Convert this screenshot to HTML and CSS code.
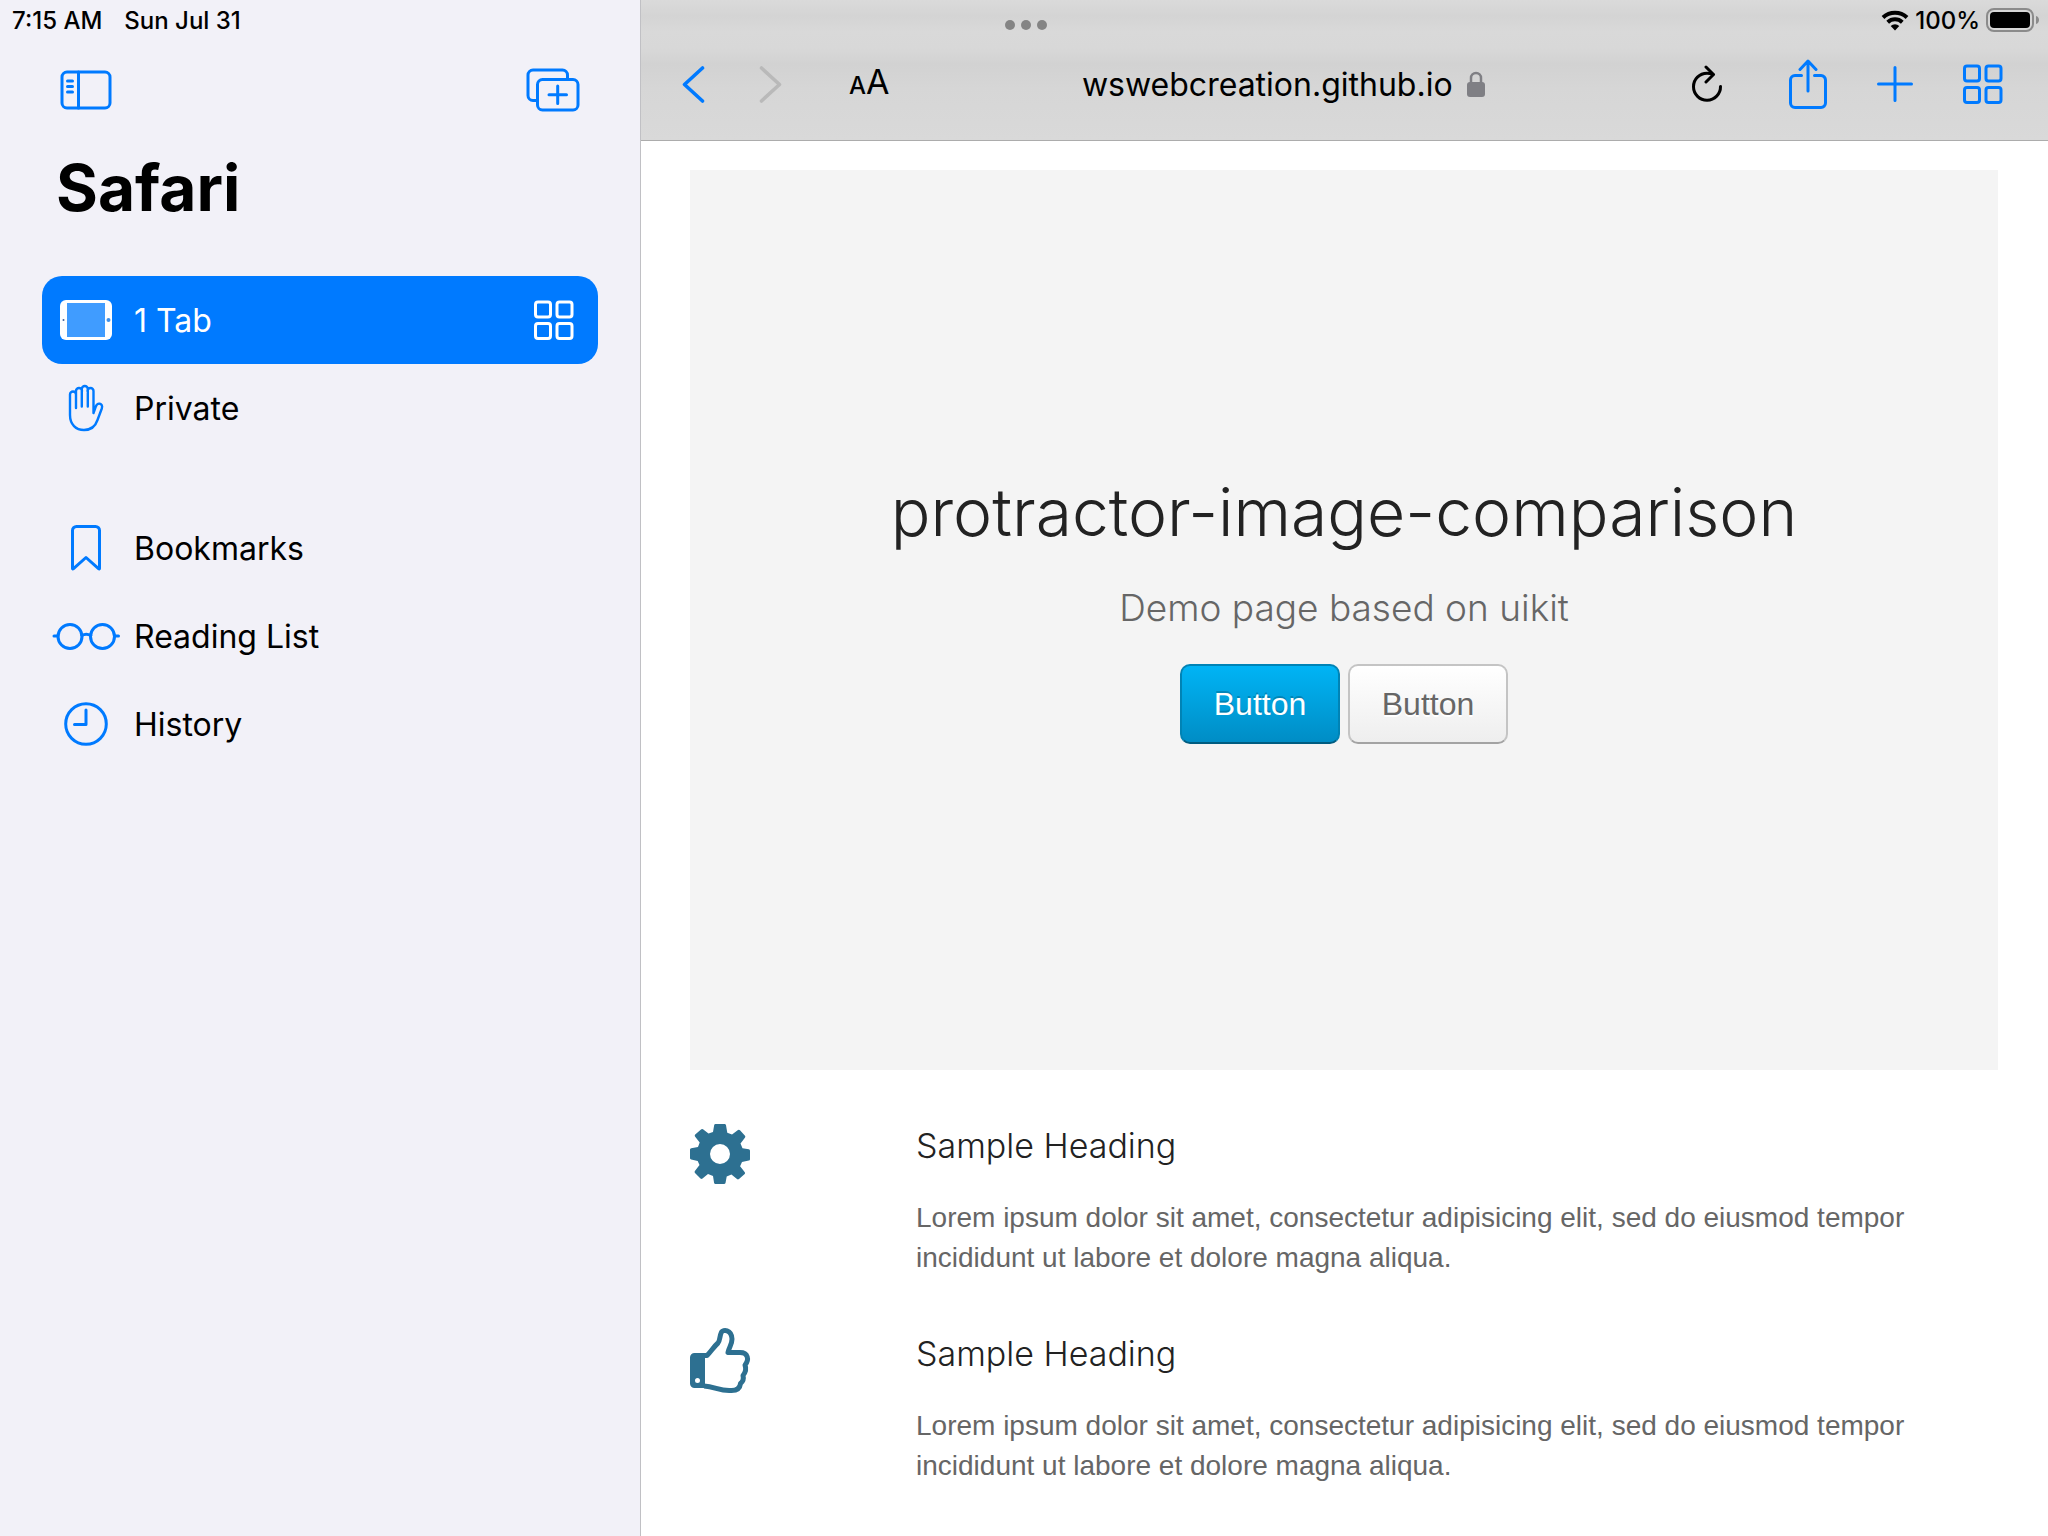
FILE: index.html
```html
<!DOCTYPE html>
<html lang="en">
<head>
<meta charset="utf-8">
<meta name="viewport" content="width=device-width, initial-scale=1">
<title>protractor-image-comparison</title>
<link rel="stylesheet" href="styles.css">
</head>
<body>
<div class="app">
  <div class="status">
    <div class="status-left"><span>7:15 AM</span><span>Sun Jul 31</span></div>
    <button class="multitask" aria-label="Multitasking"><i></i><i></i><i></i></button>
    <div class="status-right">
      <svg class="wifi" width="28" height="22" viewBox="0 0 28 22" aria-label="Wi-Fi"><path d="M2 8.500a17.500 17.500 0 0 1 24 0M6.700 13.200a10.800 10.800 0 0 1 14.600 0" fill="none" stroke="#000" stroke-width="4"/><path d="M14 21.500l-4.300-4.400a6.200 6.200 0 0 1 8.600 0z"/></svg>
      <span>100%</span>
      <svg class="battery" width="54" height="24" viewBox="0 0 54 24" aria-label="Battery"><rect x="1" y="1" width="46" height="22" rx="7" fill="none" stroke="#8b8b8b" stroke-width="2"/><rect x="4" y="4" width="40" height="16" rx="4"/><path d="M50 8c4 1 4 7 0 8z" fill="#8b8b8b"/></svg>
    </div>
  </div>

  <aside class="sidebar">
    <div class="sidebar-tools">
      <button class="icon-btn" aria-label="Hide sidebar"><svg width="52" height="40" viewBox="0 0 52 40"><g class="line"><rect x="2" y="2" width="48" height="36" rx="5"/><path d="M18.500 2v36M7.500 11h5M7.500 16.500h5M7.500 22h5"/></g></svg></button>
      <button class="icon-btn" aria-label="New tab group"><svg width="54" height="44" viewBox="0 0 54 44"><g class="line"><path d="M11 32.500H7a5 5 0 0 1-5-5V7a5 5 0 0 1 5-5h29.500a5 5 0 0 1 5 5v4"/><rect x="11.500" y="11.500" width="40.500" height="30.500" rx="5"/><path d="M31.700 18v17.500M23 26.700h17.500"/></g></svg></button>
    </div>
    <h1 class="sidebar-title">Safari</h1>
    <nav class="menu">
      <ul>
        <li><a href="#" class="item selected"><span class="item-icon"><svg width="52" height="40" viewBox="0 0 52 40"><rect width="52" height="40" rx="6" fill="#fff"/><rect x="7" y="3" width="38" height="34" fill="#409cff"/><circle cx="3.500" cy="20" r="1" fill="#40609a"/><circle cx="48.500" cy="20" r="2" fill="#4090e8"/></svg></span><span class="item-label">1 Tab</span><svg width="40" height="40" viewBox="0 0 40 40"><g class="line"><rect x="1.500" y="2" width="15" height="15" rx="2.500"/><rect x="23" y="2" width="15" height="15" rx="2.500"/><rect x="1.500" y="23.500" width="15" height="15" rx="2.500"/><rect x="23" y="23.500" width="15" height="15" rx="2.500"/></g></svg></a></li>
        <li><a href="#" class="item"><span class="item-icon"><svg width="36" height="48" viewBox="0 0 36 48"><g class="line thin"><path d="M8 24V10.500a3 3 0 0 0-6 0V31c0 9.500 6 15 14 15 7.500 0 11.500-4 13.500-10l4.300-11.500c1-3-.5-4.500-2-4.800-2-.4-3.200.8-4 2.800L25.500 29V7a3 3 0 0 0-6 0M8 11V7a3 3 0 0 1 6 0M13.800 22.500V5a3 3 0 0 1 6 0M19.800 5V22.500"/></g></svg></span><span class="item-label">Private</span></a></li>
      </ul>
      <ul>
        <li><a href="#" class="item"><span class="item-icon"><svg width="30" height="46" viewBox="0 0 30 46"><g class="line"><path d="M1.500 43.500V5.500a4 4 0 0 1 4-4h19a4 4 0 0 1 4 4v38q0 1-1 .2L15 32.500 2.500 43.700q-1 .8-1-.2z"/></g></svg></span><span class="item-label">Bookmarks</span></a></li>
        <li><a href="#" class="item"><span class="item-icon"><svg width="68" height="28" viewBox="0 0 68 28"><g class="line"><circle cx="18" cy="14.500" r="12"/><circle cx="50.500" cy="14.500" r="12"/><path d="M29.800 13.500c3-1.800 6-1.800 9 0M2 14H6M62.500 14H66.500"/></g></svg></span><span class="item-label">Reading List</span></a></li>
        <li><a href="#" class="item"><span class="item-icon"><svg width="44" height="44" viewBox="0 0 44 44"><g class="line"><circle cx="22" cy="22" r="20.300"/><path d="M22 8v14.500H10.500"/></g></svg></span><span class="item-label">History</span></a></li>
      </ul>
    </nav>
  </aside>

  <div class="browser">
    <header class="toolbar">
      <div class="history-nav">
        <button class="icon-btn" aria-label="Back"><svg width="24" height="38" viewBox="0 0 24 38"><path class="line thick" d="M21.500 3L3.500 19.500l18 16.500"/></svg></button>
        <button class="icon-btn off" aria-label="Forward" disabled><svg width="24" height="38" viewBox="0 0 24 38"><path class="line thick" d="M2.500 3l18 16.500L2.500 36"/></svg></button>
      </div>
      <div class="address">
        <button class="reader" aria-label="Page settings"><span class="small-a">A</span><span>A</span></button>
        <div class="url"><span>wswebcreation.github.io</span><svg width="18" height="28" viewBox="0 0 18 28" aria-label="Secure"><path d="M4 14V8a5 5 0 0 1 10 0v6" fill="none" stroke="#7f7f84" stroke-width="2.500"/><rect y="12" width="18" height="15" rx="3" fill="#7f7f84"/></svg></div>
        <button class="icon-btn dark" aria-label="Reload"><svg width="32" height="38" viewBox="0 0 32 38"><g class="line"><path d="M22 9.500C20 8.600 18 8.200 16 8.200A13.500 13.500 0 1 0 29.500 21.500"/><path d="M15 2l7.500 7.500-7.500 7.500"/></g></svg></button>
      </div>
      <div class="actions">
        <button class="icon-btn" aria-label="Share"><svg width="38" height="50" viewBox="0 0 38 50"><g class="line"><path d="M12.500 16.500H6a4.500 4.500 0 0 0-4.500 4.500v23A4.500 4.500 0 0 0 6 48.500h26a4.500 4.500 0 0 0 4.500-4.500V21a4.500 4.500 0 0 0-4.500-4.500h-6.500M19 32V2.500M11 10.500l8-8.500 8 8.500"/></g></svg></button>
        <button class="icon-btn" aria-label="New tab"><svg width="36" height="36" viewBox="0 0 36 36"><path class="line" d="M18 1.500v33M1.500 18h33"/></svg></button>
        <button class="icon-btn" aria-label="Tab overview"><svg width="40" height="40" viewBox="0 0 40 40"><g class="line"><rect x="1.500" y="2" width="15" height="15" rx="2.500"/><rect x="23" y="2" width="15" height="15" rx="2.500"/><rect x="1.500" y="23.500" width="15" height="15" rx="2.500"/><rect x="23" y="23.500" width="15" height="15" rx="2.500"/></g></svg></button>
      </div>
    </header>

    <main class="page">
      <section class="hero">
        <h2>protractor-image-comparison</h2>
        <p>Demo page based on uikit</p>
        <div class="hero-actions">
          <button class="btn primary">Button</button>
          <button class="btn">Button</button>
        </div>
      </section>

      <article class="feature">
        <svg class="feature-icon" width="60" height="60" viewBox="0 0 60 60" aria-hidden="true"><path fill="#2d7091" fill-rule="evenodd" d="M25.500 0h9q1.200 0 1.500 1.200l1.300 7.500 4.700 1.900 6-4.500q1-.7 2 .2l5 5.500q.8 1-.1 2l-4.400 5.700 2 4.800 6.300 1q1.200.2 1.200 1.500v8.400q0 1.200-1.200 1.400l-6.800 1.300-1.900 4.300 4.700 6q.7 1-.1 1.900L49 55q-1 .8-2 .1l-5.600-4.500-4.700 2-1.200 6.400q-.3 1-1.500 1h-8.500q-1.100 0-1.400-1L23 52l-5-2-5.500 4.500q-1 .8-2 0L5 49q-.9-1-.1-2l4.600-6L7.700 37 1.200 35.500Q0 35.300 0 34.200v-8.600q0-1.200 1.200-1.400L8 23l1.700-4.600L5 12.500q-.7-1 .2-2L11 5.400q1-.8 2-.1l5.500 4.300L23 8l1.200-7q.3-1 1.300-1zM30 20a10 10 0 1 0 0 20 10 10 0 1 0 0-20z"/></svg>
        <div class="feature-text">
          <h3>Sample Heading</h3>
          <p>Lorem ipsum dolor sit amet, consectetur adipisicing elit, sed do eiusmod tempor incididunt ut labore et dolore magna aliqua.</p>
        </div>
      </article>

      <article class="feature">
        <svg class="feature-icon" width="60" height="60" viewBox="0 4 60 60" aria-hidden="true"><path fill="#2d7091" fill-rule="evenodd" d="M4.500 25H15v35H4.500A4.500 4.500 0 0 1 0 55.500v-26A4.500 4.500 0 0 1 4.500 25zM7.500 50a2.500 2.500 0 1 0 0 5 2.500 2.500 0 1 0 0-5z"/><path fill="none" stroke="#2d7091" stroke-width="5" stroke-linejoin="round" d="M14 27.500h3c4-4 7-9 11-12.500 2-2 1.500-7 3.500-11 1.500-2.500 10-3 10.500 7 0 6-3 8-4 13.500h12c8 0 9.500 7 5 12.500 1.500 4 .5 7.500-2 10.500.8 3 0 6-2.500 8-.5 5-4 7-9 7C30 63.500 25 58.500 14 58"/></svg>
        <div class="feature-text">
          <h3>Sample Heading</h3>
          <p>Lorem ipsum dolor sit amet, consectetur adipisicing elit, sed do eiusmod tempor incididunt ut labore et dolore magna aliqua.</p>
        </div>
      </article>
    </main>
  </div>
</div>
</body>
</html>
```
FILE: styles.css
```css
* {
  box-sizing: border-box;
}

body,
h1,
h2,
h3,
p,
ul {
  margin: 0;
  padding: 0;
}

body {
  font-family: Inter, "Liberation Sans", sans-serif;
  color: #000;
  background: #fff;
}

ul {
  list-style: none;
}

svg {
  display: block;
  flex: none;
}

button {
  font-family: inherit;
  color: inherit;
  background: none;
  border: 0;
  padding: 0;
}

.app {
  position: relative;
  display: grid;
  grid-template-columns: 641px 1fr;
  min-height: 100vh;
}

/* Status bar floats over both columns */
.status {
  position: absolute;
  top: 0;
  left: 0;
  right: 0;
  display: grid;
  grid-template-columns: 1fr auto 1fr;
  align-items: center;
  height: 40px;
  padding: 0 8px 0 12px;
  font-size: 24px;
  font-weight: 500;
}

.status-left {
  display: flex;
  gap: 22px;
}

.status-right {
  display: flex;
  align-items: center;
  justify-content: flex-end;
  gap: 6px;
}

.multitask {
  display: flex;
  gap: 6px;
  padding-top: 10px;
}

.multitask i {
  width: 10px;
  height: 10px;
  border-radius: 50%;
  background: #848484;
}

.line {
  fill: none;
  stroke: currentColor;
  stroke-width: 3;
  stroke-linecap: round;
  stroke-linejoin: round;
}

.thin {
  stroke-width: 2.4;
}

.thick {
  stroke-width: 3.6;
}

.icon-btn {
  color: #007aff;
}

.icon-btn.off {
  color: #b9b9b9;
}

.icon-btn.dark {
  color: #000;
}

/* Sidebar */
.sidebar {
  padding: 68px 42px 0;
  background: #f2f1f8;
  border-right: 1px solid #c0c0c4;
}

.sidebar-tools {
  display: flex;
  align-items: center;
  justify-content: space-between;
  padding: 0 18px;
}

.sidebar-title {
  margin-top: 36px;
  padding-left: 14px;
  font-size: 64px;
  line-height: 80px;
  font-weight: 700;
}

.menu {
  display: grid;
  gap: 52px;
  margin-top: 48px;
}

.item {
  display: flex;
  align-items: center;
  height: 88px;
  padding-right: 24px;
  border-radius: 20px;
  color: #007aff;
  text-decoration: none;
}

.item.selected {
  background: #007aff;
  color: #fff;
}

.item-icon {
  display: flex;
  justify-content: center;
  width: 88px;
  margin-right: 4px;
}

.item-label {
  flex: 1;
  font-size: 32px;
  color: #000;
}

.selected .item-label {
  color: #fff;
}

/* Browser */
.toolbar {
  display: flex;
  align-items: center;
  height: 141px;
  padding: 28px 45px 0 40px;
  border-bottom: 1px solid #acacac;
  background: linear-gradient(#dadada, #d4d4d4 16px, #d9d9d9 32px, #d8d8d8 48px, #d2d2d2 64px, #d6d6d6 88px, #d9d9d9);
}

.history-nav {
  display: flex;
  gap: 54px;
}

.address {
  flex: 1;
  display: flex;
  align-items: center;
  justify-content: space-between;
  margin: 0 66px;
}

.reader {
  font-size: 34px;
  line-height: 40px;
}

.small-a {
  font-size: 24px;
  font-weight: 500;
}

.url {
  display: flex;
  align-items: center;
  gap: 14px;
  margin-right: 14px;
  font-size: 32px;
}

.actions {
  display: flex;
  align-items: center;
  gap: 50px;
}

.page {
  padding: 29px 50px 56px 49px;
}

.hero {
  display: flex;
  flex-direction: column;
  align-items: center;
  justify-content: center;
  min-height: 900px;
  padding-bottom: 26px;
  background: #f4f4f4;
}

.hero h2 {
  font-size: 66px;
  line-height: 84px;
  font-weight: 300;
  color: #222;
}

.hero p {
  margin: 24px 0 26px;
  font-size: 37px;
  line-height: 60px;
  font-weight: 300;
  color: #666;
}

.hero-actions {
  display: flex;
  gap: 8px;
}

.btn {
  min-width: 160px;
  height: 80px;
  border: 2px solid #c4c4c4;
  border-bottom-color: #a3a3a3;
  border-radius: 10px;
  background: linear-gradient(#fff, #eee);
  font: 32px "Liberation Sans", sans-serif;
  color: #666;
  text-shadow: 0 2px 0 #fff;
}

.btn.primary {
  border-color: #0083b5;
  border-bottom-color: #005c80;
  background: linear-gradient(#00b4f5, #008dc5);
  color: #fff;
  text-shadow: 0 -2px 0 rgba(0, 0, 0, 0.2);
}

.feature {
  display: grid;
  grid-template-columns: 226px 1fr;
  margin-top: 54px;
}

.feature-icon {
  overflow: visible;
}

.feature h3 {
  margin-bottom: 30px;
  font-size: 34px;
  line-height: 44px;
  font-weight: 300;
  color: #222;
}

.feature p {
  font: 28px/40px "Liberation Sans", sans-serif;
  color: #666;
}
```
